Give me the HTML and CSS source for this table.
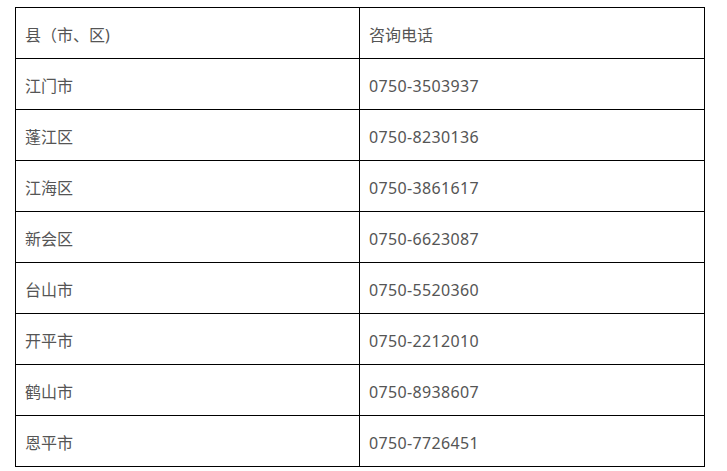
FILE: index.html
```html
<!DOCTYPE html>
<html lang="zh-CN">
<head>
<meta charset="utf-8">
<link rel="stylesheet" href="styles.css">
</head>
<body>
<table class="tbl">
  <tr><td class="c1">县（市、区)</td><td class="c2">咨询电话</td></tr>
  <tr><td class="c1">江门市</td><td class="c2 num">0750-3503937</td></tr>
  <tr><td class="c1">蓬江区</td><td class="c2 num">0750-8230136</td></tr>
  <tr><td class="c1">江海区</td><td class="c2 num">0750-3861617</td></tr>
  <tr><td class="c1">新会区</td><td class="c2 num">0750-6623087</td></tr>
  <tr><td class="c1">台山市</td><td class="c2 num">0750-5520360</td></tr>
  <tr><td class="c1">开平市</td><td class="c2 num">0750-2212010</td></tr>
  <tr><td class="c1">鹤山市</td><td class="c2 num">0750-8938607</td></tr>
  <tr><td class="c1">恩平市</td><td class="c2 num">0750-7726451</td></tr>
</table>
</body>
</html>
```
FILE: styles.css
```css
html, body {
  margin: 0;
  padding: 0;
  background: #fff;
}
body {
  padding: 7px 0 0 15px;
}
.tbl {
  border-collapse: collapse;
  width: 690px;
  table-layout: fixed;
  font-family: "Noto Sans", "Noto Sans CJK SC", sans-serif;
  font-size: 16px;
  color: #555;
}
.tbl td {
  border: 1px solid #000;
  height: 51px;
  padding: 4px 9px 0 9px;
  box-sizing: border-box;
  vertical-align: middle;
  line-height: 20px;
}
.tbl td.c1 {
  width: 344px;
}
.tbl td.num {
  letter-spacing: 0.35px;
}
```
